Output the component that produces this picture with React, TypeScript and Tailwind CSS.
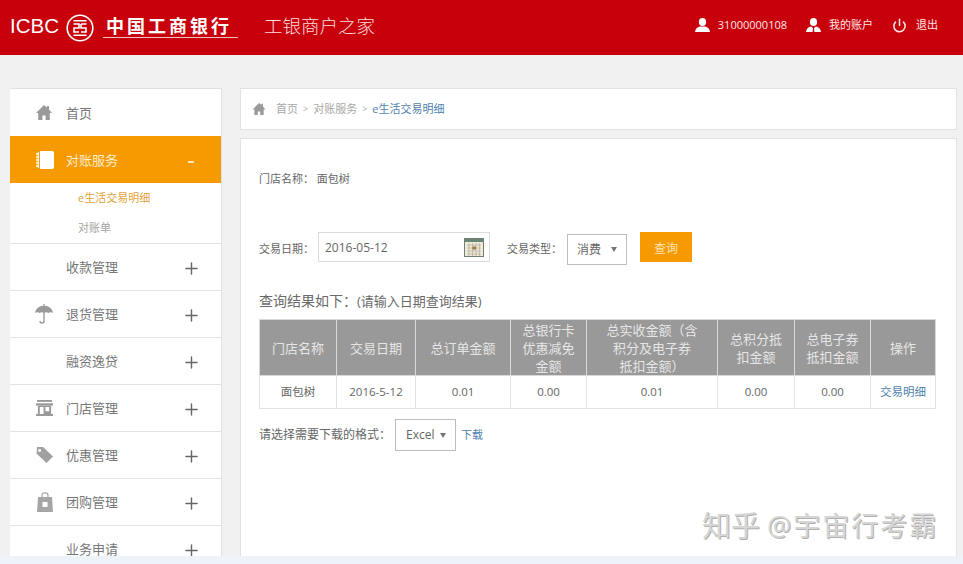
import { Plus, Power } from 'lucide-react';

const FONT = "font-['Open_Sans','Noto_Sans_CJK_SC',sans-serif]";

const HomeIcon = ({ className }: { className?: string }) => (
  <svg viewBox="0 0 16 15" className={className} fill="currentColor">
    <path d="M8 0 L11 2.6 V1 H13 V4.4 L16 8 H13.8 V15 H9.6 V10.5 H6.4 V15 H2.2 V8 H0 Z" />
  </svg>
);

const BookIcon = () => (
  <svg viewBox="0 0 18 18" className="h-[18px] w-[18px]" fill="#fff">
    <path d="M4 0 H16 Q18 0 18 2 V16 Q18 18 16 18 H4 Z" />
    <path d="M1.5 1 H3 V17 H1.5 Z" opacity="0.7" />
    <path d="M0 3 H3 M0 6 H3 M0 9 H3 M0 12 H3 M0 15 H3" stroke="#fff" strokeWidth="1.5" />
  </svg>
);

const UmbrellaIcon = () => (
  <svg viewBox="0 0 18 20" className="h-[20px] w-[18px]" fill="#9a9a9a">
    <path d="M0 9 Q1 2 9 1.5 Q17 2 18 9 Q15.5 7.5 13.5 9 Q11 7.5 9 9 Q7 7.5 4.5 9 Q2.5 7.5 0 9 Z" />
    <path d="M9 0 V1.5 M9 8 V17 Q9 19 7 19 Q5 19 5 17" fill="none" stroke="#9a9a9a" strokeWidth="1.4" />
  </svg>
);

const StoreIcon = () => (
  <svg viewBox="0 0 18 17" className="h-[16px] w-[17px]" fill="#9a9a9a">
    <path d="M1 0 H17 V2 H1 Z" />
    <path d="M0 3.5 H18 V6 H0 Z" />
    <path d="M2 6 H16 V15 H18 V17 H0 V15 H2 Z M4 7.5 V15 H8 V7.5 Z M10 7.5 V12 H14 V7.5 Z" fillRule="evenodd" />
  </svg>
);

const TagIcon = () => (
  <svg viewBox="0 0 17 16" className="h-[16px] w-[17px]" fill="#a0a0a0">
    <path d="M1 0 H7 L17 9.5 L10.5 16 L0.5 6.5 Z M3.5 2 A1.5 1.5 0 1 0 3.6 5 A1.5 1.5 0 1 0 3.5 2 Z" fillRule="evenodd" />
  </svg>
);

const BagIcon = () => (
  <svg viewBox="0 0 16 20" className="h-[20px] w-[16px]" fill="#a6a6a6">
    <path d="M1 5 H15 L16 20 H0 Z M5.5 10 V15 H10.5 V10 Z" fillRule="evenodd" />
    <path d="M5 5 V3 Q5 0.8 8 0.8 Q11 0.8 11 3 V5" fill="none" stroke="#a6a6a6" strokeWidth="1.2" />
  </svg>
);

const UserIcon = () => (
  <svg viewBox="0 0 15 14" className="h-[14px] w-[15px]" fill="#fff">
    <ellipse cx="7.5" cy="4" rx="3.6" ry="4" />
    <path d="M0 14 Q0.5 9.5 5 8.6 H10 Q14.5 9.5 15 14 Z" />
  </svg>
);

const AccountIcon = () => (
  <svg viewBox="0 0 15 14" className="h-[14px] w-[15px]" fill="#fff">
    <ellipse cx="7.5" cy="4" rx="3.6" ry="4" />
    <path d="M0 14 Q0.5 9.5 5 8.6 L7 10 L6.6 14 Z M15 14 Q14.5 9.5 10 8.6 L8 10 L8.4 14 Z" />
  </svg>
);

const CalendarIcon = () => (
  <svg viewBox="0 0 20 19" className="h-[19px] w-[20px]">
    <rect x="0.5" y="0.5" width="19" height="18" fill="#eee9d8" stroke="#6f7f72" />
    <rect x="1" y="1" width="18" height="3" fill="#6b8574" />
    <path d="M3 7 H17 M3 10 H17 M3 13 H17 M3 16 H17 M5 5 V18 M8.5 5 V18 M12 5 V18 M15.5 5 V18" stroke="#b9b4a2" strokeWidth="0.8" />
    <rect x="8.5" y="8.5" width="3.5" height="3" fill="#9a7d3a" />
  </svg>
);

// coin outline with the square hole formed by the two interlocked strokes
const IcbcMark = () => (
  <svg viewBox="0 0 28 28" className="h-[28px] w-[28px]" fill="none" stroke="#fff">
    <circle cx="14" cy="14" r="12.8" strokeWidth="1.6" />
    <path d="M7.5 6.8 H20.5 M7.5 21.2 H20.5" strokeWidth="1.6" />
    <path d="M7.5 10 H13 V14 H8 V18 H13 M15 10 H20.5 M15 10 V14 H20 V18 H15" strokeWidth="1.6" />
  </svg>
);

const menu = [
  { label: '收款管理' },
  { label: '退货管理', icon: <UmbrellaIcon /> },
  { label: '融资逸贷' },
  { label: '门店管理', icon: <StoreIcon /> },
  { label: '优惠管理', icon: <TagIcon /> },
  { label: '团购管理', icon: <BagIcon /> },
  { label: '业务申请' },
];

const columns = [
  { title: ['门店名称'], value: '面包树', width: 'w-[77px]' },
  { title: ['交易日期'], value: '2016-5-12', width: 'w-[79px]' },
  { title: ['总订单金额'], value: '0.01', width: 'w-[95px]' },
  { title: ['总银行卡', '优惠减免', '金额'], value: '0.00', width: 'w-[76px]' },
  { title: ['总实收金额（含', '积分及电子券', '抵扣金额）'], value: '0.01', width: 'w-[131px]' },
  { title: ['总积分抵', '扣金额'], value: '0.00', width: 'w-[77px]' },
  { title: ['总电子券', '抵扣金额'], value: '0.00', width: 'w-[76px]' },
  { title: ['操作'], value: '交易明细', width: 'w-[65px]' },
];

const Select = ({ value, className }: { value: string; className: string }) => (
  <div className={`flex items-center border border-[#bdbdbd] bg-white text-[12px] text-[#666] ${className}`}>
    <span>{value}</span>
    <span className="ml-auto h-0 w-0 border-x-[3px] border-t-[5px] border-x-transparent border-t-[#777]" />
  </div>
);

export default function App() {
  return (
    <div className={`relative h-[564px] w-[963px] overflow-hidden bg-[#f1f1f1] ${FONT}`}>
      {/* Header */}
      <header className="flex h-[55px] items-center bg-[#c8000b] pl-[10px] text-white">
        <span className="mb-[2px] w-[56px] font-['Liberation_Sans',sans-serif] text-[20.5px] leading-none">ICBC</span>
        <IcbcMark />
        <span className="mb-[3px] ml-[9px] w-[135px] whitespace-nowrap border-b border-[#f0c0c0] pl-[3px] text-[18px] font-bold leading-[22px] tracking-[3px]">中国工商银行</span>
        <span className="mb-[3px] ml-[26px] text-[18.5px] font-light leading-none text-[#f8dcdc]">工银商户之家</span>
        <div className="mb-[5px] ml-auto flex items-center pr-[25px] text-[11px] text-[#fbe6e6]">
          <UserIcon />
          <span className="ml-[8px]">31000000108</span>
          <span className="ml-[19px]"><AccountIcon /></span>
          <span className="ml-[8px]">我的账户</span>
          <Power className="ml-[19px] h-[15px] w-[15px]" strokeWidth={2.4} />
          <span className="ml-[9px]">退出</span>
        </div>
      </header>

      <div className="flex items-start gap-[18px] pl-[10px] pr-[6px] pt-[33px]">
        {/* Sidebar */}
        <aside className="h-[480px] w-[212px] shrink-0 border-y border-r border-[#e0e0e0] bg-white text-[13px] text-[#777]">
          <div className="flex h-[47px] items-center pl-[26px]">
            <HomeIcon className="h-[15px] w-[16px] text-[#9a9a9a]" />
            <span className="ml-[14px] pt-[2px]">首页</span>
          </div>
          <div className="flex h-[47px] items-center bg-[#f59a00] pl-[26px] pr-[27px] text-[#fdeccd]">
            <BookIcon />
            <span className="ml-[12px] pt-[2px]">对账服务</span>
            <span className="ml-auto mt-[5px] h-[1.5px] w-[6px] bg-[#fde3b8]" />
          </div>
          <div className="h-[61px] border-b border-[#e2e2e2] pl-[68px] text-[11px] leading-[30px]">
            <div className="text-[#e3a23a]">e生活交易明细</div>
            <div className="text-[#a5a5a5]">对账单</div>
          </div>
          {menu.map(item => (
            <div key={item.label} className="flex h-[47px] items-center border-b border-[#e2e2e2] pr-[20px]">
              <span className="flex w-[43px] justify-end">{item.icon}</span>
              <span className="ml-[13px] pt-[2px]">{item.label}</span>
              <Plus className="ml-auto mt-[3px] h-[19px] w-[19px] text-[#666]" strokeWidth={1.8} />
            </div>
          ))}
        </aside>

        {/* Main */}
        <main className="w-[717px]">
          <nav className="flex h-[42px] items-center border border-[#e2e2e2] bg-white pl-[11px] text-[11px] text-[#a8a8a8]">
            <HomeIcon className="h-[12px] w-[14px] text-[#9a9a9a]" />
            <span className="ml-[10px]">首页</span>
            <span className="mx-[5px] text-[9px]">&gt;</span>
            <span>对账服务</span>
            <span className="mx-[5px] text-[9px]">&gt;</span>
            <span className="text-[#4f7fae]">e生活交易明细</span>
          </nav>

          <section className="mt-[8px] h-[430px] border border-[#e2e2e2] bg-white pl-[18px] text-[11px] text-[#666]">
            <p className="pt-[32px] leading-[16px]">门店名称： 面包树</p>

            <div className="mt-[45px] flex h-[33px] items-start">
              <span className="w-[59px] leading-[33px]">交易日期：</span>
              <div className="flex h-[30px] w-[172px] items-center justify-between border border-[#dcdcdc] pl-[6px] pr-[5px] text-[12px]">
                <span className="pt-[2px]">2016-05-12</span>
                <CalendarIcon />
              </div>
              <span className="ml-[17px] w-[60px] leading-[33px]">交易类型：</span>
              <Select value="消费" className="mt-[2px] h-[31px] w-[60px] pl-[9px] pr-[9px]" />
              <button className="ml-[13px] h-[30px] w-[52px] bg-[#f59a00] pt-[3px] text-[12px] text-[#fde3b8]">查询</button>
            </div>

            <p className="mt-[26px] text-[14px] leading-[20px] text-[#6a6a6a]">
              查询结果如下：<span className="text-[13px]">(请输入日期查询结果)</span>
            </p>

            <table className="mt-[8px] w-[676px] table-fixed border-collapse text-center text-[11.5px]">
              <colgroup>
                {columns.map(c => (
                  <col key={c.value + c.width} className={c.width} />
                ))}
              </colgroup>
              <thead>
                <tr className="h-[56px] bg-[#999999] text-[#e6e6e6]">
                  {columns.map(c => (
                    <th key={c.value + c.width} className="border border-[#d9d9d9] p-0 text-[13px] font-normal leading-[18px]">
                      {c.title.map(line => (
                        <div key={line}>{line}</div>
                      ))}
                    </th>
                  ))}
                </tr>
              </thead>
              <tbody>
                <tr className="h-[33px]">
                  {columns.map(c => (
                    <td key={c.value + c.width} className={`border border-[#e2e2e2] ${c.value === '交易明细' ? 'text-[#4f7fae]' : ''}`}>{c.value}</td>
                  ))}
                </tr>
              </tbody>
            </table>

            <div className="mt-[10px] flex items-center">
              <span className="w-[136px] text-[12px]">请选择需要下载的格式：</span>
              <Select value="Excel" className="h-[32px] w-[61px] pl-[10px] pr-[9px]" />
              <a className="ml-[5px] text-[#4f7fae]">下载</a>
            </div>
          </section>
        </main>
      </div>

      {/* Bottom edge of the captured page */}
      <div className="absolute bottom-0 left-0 h-[8px] w-full bg-[#eef3f9]" />

      {/* Watermark */}
      <div className="absolute left-[702px] top-[505px] flex h-[40px] items-center whitespace-nowrap text-[#d6d6d6] [text-shadow:1px_1px_0_#b0b0b0]">
        <span className="text-[29px] leading-none">知乎</span>
        <span className="ml-[7px] text-[27px] leading-none tracking-[2px]">@宇宙行考霸</span>
      </div>
    </div>
  );
}
